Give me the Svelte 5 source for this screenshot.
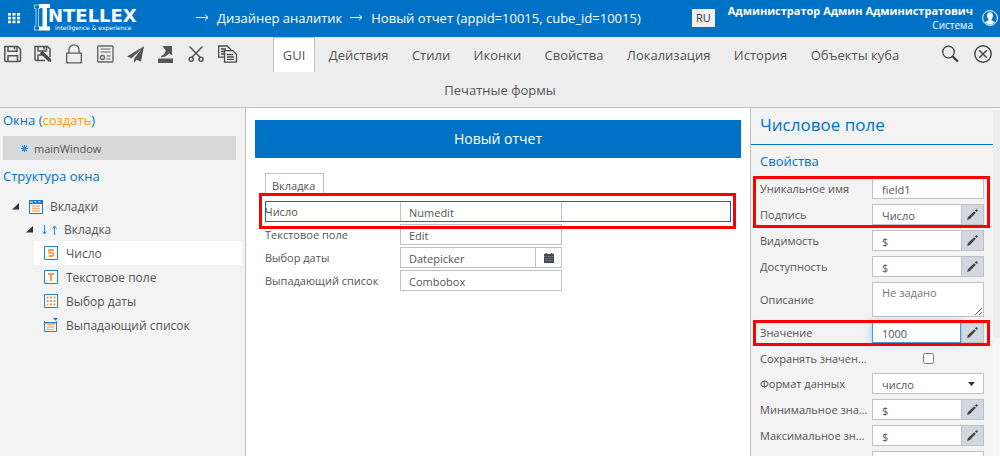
<script>
  let tabs = ['GUI', 'Действия', 'Стили', 'Иконки', 'Свойства', 'Локализация', 'История', 'Объекты куба', 'Печатные формы'];
  let activeTab = $state('GUI');

  let leaves = [
    { icon: 'number', label: 'Число' },
    { icon: 'text', label: 'Текстовое поле' },
    { icon: 'date', label: 'Выбор даты' },
    { icon: 'list', label: 'Выпадающий список' },
  ];
  let activeLeaf = $state('Число');

  let formFields = [
    { id: 'numedit', label: 'Число', value: 'Numedit', selected: true },
    { id: 'edit', label: 'Текстовое поле', value: 'Edit' },
    { id: 'datepicker', label: 'Выбор даты', value: 'Datepicker', date: true },
    { id: 'combobox', label: 'Выпадающий список', value: 'Combobox' },
  ];

  let groups = [
    {
      marked: true,
      rows: [
        { id: 'name', label: 'Уникальное имя', value: 'field1' },
        { id: 'caption', label: 'Подпись', value: 'Число', edit: true },
      ],
    },
    {
      rows: [
        { id: 'visible', label: 'Видимость', value: '$', edit: true },
        { id: 'enabled', label: 'Доступность', value: '$', edit: true },
        { id: 'description', label: 'Описание', type: 'area', placeholder: 'Не задано' },
      ],
    },
    {
      marked: true,
      rows: [{ id: 'value', label: 'Значение', value: '1000', edit: true, focused: true }],
    },
    {
      rows: [
        { id: 'keep', label: 'Сохранять значение', type: 'check' },
        { id: 'format', label: 'Формат данных', type: 'select', value: 'число' },
        { id: 'min', label: 'Минимальное значение', value: '$', edit: true },
        { id: 'max', label: 'Максимальное значение', value: '$', edit: true },
        { id: 'step', label: 'Максимальный шаг', value: '' },
      ],
    },
  ];
</script>

<div class="page">
  <header class="header">
    <button class="icon-btn apps" type="button" aria-label="Меню">
      <svg width="12" height="10" viewBox="0 0 12 10" fill="#fff">
        {#each [0, 4, 8] as y}
          {#each [0, 4.5, 9] as x}
            <rect {x} y={y * 0.95} width="3" height="2.6" />
          {/each}
        {/each}
      </svg>
    </button>

    <a class="logo" href="#home" aria-label="Intellex">
      <svg width="17" height="27" viewBox="0 0 17 27">
        <path d="M.5 1H6v3.5H4.500v18H6V26H.5v-3.500H2v-18H.5z" fill="none" stroke="#cfe5f7" stroke-width="0.8" />
        <path d="M5 0h11v4h-3v18.500h3v4H5v-4h3.500V4H5z" fill="#fff" />
      </svg>
      <span class="logo-text">
        <b>NTELLEX</b>
        <small>intelligence &amp; experience</small>
      </span>
    </a>

    <nav class="crumbs">
      {#each ['Дизайнер аналитик', 'Новый отчет (appid=10015, cube_id=10015)'] as crumb}
        <svg width="13" height="7" viewBox="0 0 13 7" fill="none" stroke="#fff">
          <path d="M0 3.500h12M9 .8l3 2.700-3 2.700" />
        </svg>
        <a href="#crumb">{crumb}</a>
      {/each}
    </nav>

    <button class="lang" type="button">RU</button>

    <div class="user">
      <b>Администратор Админ Администратович</b>
      <span>Система</span>
    </div>
    <button class="icon-btn" type="button" aria-label="Профиль">
      <svg width="16" height="16" viewBox="0 0 16 16">
        <circle cx="8" cy="8" r="7.400" fill="none" stroke="#fff" />
        <path d="M8 2.200c-2 0-3 1.400-3 3.200 0 1.500.6 2.700 1.500 3.500v1.300L3 12c1.200 1.500 3 2.600 5 2.600s3.800-1.100 5-2.600l-3.500-1.800V8.900C10.400 8.100 11 6.900 11 5.400c0-1.800-1-3.200-3-3.200z" fill="#fff" />
      </svg>
    </button>
  </header>

  <div class="toolbar">
    <div class="tools">
      <button class="icon-btn" type="button" aria-label="Сохранить">
        <svg width="20" height="18" viewBox="0 0 20 18" fill="none" stroke="#555" stroke-width="1.500">
          <path d="M1.800 1.500h13l2.700 2.700v11a1.300 1.300 0 0 1-1.300 1.300H3.100a1.300 1.300 0 0 1-1.300-1.300z" />
          <path d="M5 1.500v4.700h9V1.500M11.500 2v2.500M5 16.500v-5.700h9.500v5.700" />
        </svg>
      </button>
      <button class="icon-btn" type="button" aria-label="Сохранить как">
        <svg width="20" height="18" viewBox="0 0 20 18" fill="none" stroke="#555" stroke-width="1.500">
          <path d="M11 15.500H2.200a1.300 1.300 0 0 1-1.200-1.300V1.500h12.500L16 4v8" />
          <path d="M4 1.500V6h8.500V1.500M10 2v2.500M4 15v-5h5" />
          <path d="M7 7l9 8.500" stroke-width="3.600" stroke="#4a4a4a" />
          <path d="M15 14.500l2 2" stroke-width="2" />
        </svg>
      </button>
      <button class="icon-btn" type="button" aria-label="Заблокировать">
        <svg width="20" height="20" viewBox="0 0 20 20" fill="none" stroke="#5a5a5a" stroke-width="1.300">
          <path d="M1.700 9.200h14.600v9.600H1.700zM4 9V5.500a5 4.700 0 0 1 10 0V9" />
        </svg>
      </button>
      <button class="icon-btn" type="button" aria-label="Отчет">
        <svg width="20" height="18" viewBox="0 0 20 18" fill="none" stroke="#666" stroke-width="1.400">
          <rect x="1.700" y="1" width="15.300" height="16" rx="1" />
          <path d="M4.500 4h10M4.500 7h10M10.500 11h4M10.500 14h4" stroke-width="1.200" />
          <circle cx="6.500" cy="12.500" r="2" />
        </svg>
      </button>
      <button class="icon-btn" type="button" aria-label="Отправить">
        <svg width="20" height="18" viewBox="0 0 20 18" fill="#555">
          <path d="M17 1.200L0 11.500l4.500 1.700L14.500 4 7 13.800v4l2.600-3 4.400 2z" />
        </svg>
      </button>
      <button class="icon-btn" type="button" aria-label="Выгрузить">
        <svg width="20" height="18" viewBox="0 0 20 18" fill="#555">
          <path d="M0 13.500h15V18H0z" />
          <path d="M4.500 1H14v9.500l-2.800-2.300C9.500 10.500 7 12 4 12.200c-1.500.1-1.500-1 0-1.600 2-1 3.200-2.600 3.700-5.200z" />
        </svg>
      </button>
      <button class="icon-btn" type="button" aria-label="Вырезать">
        <svg width="20" height="18" viewBox="0 0 20 18" fill="none" stroke="#555" stroke-width="1.500">
          <path d="M.5 1.500l10.800 11M13.500 1.500l-10.800 11" />
          <circle cx="2.200" cy="14.200" r="2" />
          <circle cx="12" cy="14.200" r="2" />
        </svg>
      </button>
      <button class="icon-btn" type="button" aria-label="Копировать">
        <svg width="20" height="18" viewBox="0 0 20 18" fill="#eee" stroke="#4a4a4a" stroke-width="1.300">
          <path d="M-1.300 1h8.500l3.500 3.500v7.700h-12zM1 4h5M1 6.500h6M1 9h5" />
          <path d="M4.500 5.700h8.300l3.700 3.500v8h-12z" />
          <path d="M7 9.700h6M7 12h7M7 14.300h7" />
        </svg>
      </button>
    </div>

    <div class="tools tools-right">
      <button class="icon-btn" type="button" aria-label="Поиск">
        <svg width="17" height="18" viewBox="0 0 17 18" fill="none" stroke="#333">
          <circle cx="6.500" cy="7" r="5.800" stroke-width="1.200" />
          <path d="M10.800 11.500l5 5" stroke-width="2" />
        </svg>
      </button>
      <button class="icon-btn" type="button" aria-label="Закрыть">
        <svg width="18" height="18" viewBox="0 0 18 18" fill="none" stroke="#444" stroke-width="1.400">
          <circle cx="9" cy="9" r="8.200" />
          <path d="M5.200 5.200l7.600 7.600M12.800 5.200l-7.600 7.600" />
        </svg>
      </button>
    </div>

    <nav class="tabs">
      {#each tabs as tab}
        <button type="button" class="tab" class:active={activeTab === tab} onclick={() => (activeTab = tab)}>{tab}</button>{' '}
      {/each}
    </nav>
  </div>

  <main class="body">
    <aside class="left">
      <h2>Окна (<a href="#create">создать</a>)</h2>
      <button type="button" class="window">
        <svg width="7" height="7" viewBox="0 0 7 7" stroke="#2f8ad8" stroke-width="1.200">
          <path d="M3.500 0v7M0 3.500h7M1 1l5 5M6 1L1 6" />
        </svg>
        mainWindow
      </button>
      <h2>Структура окна</h2>

      <div class="tree">
        <div class="node">
          <svg width="7" height="7" viewBox="0 0 7 7"><path d="M7 0v6.500H0z" fill="#333" /></svg>
          <svg class="tabs-icon" width="14" height="14" viewBox="0 0 14 14">
            <path d="M.5.500h13v13H.5z" fill="#fff" stroke="#1478cc" />
            <path d="M0 0h14v4H0z" fill="#1478cc" />
            <path d="M1 1h3v2H1z" fill="#f9a95c" />
            <path d="M5.500 1h2v1.500h-2zM9.500 1h2v1.500h-2z" fill="#b5d6f0" />
            <path d="M3 6h8M3 8.500h8M3 11h8" stroke="#f9b374" stroke-width="1.400" />
          </svg>
          Вкладки
        </div>
        <div class="node inner">
          <svg width="7" height="7" viewBox="0 0 7 7"><path d="M7 0v6.500H0z" fill="#333" /></svg>
          <svg class="arrows" width="15" height="10" viewBox="0 0 15 10" fill="none" stroke="#2483d5">
            <path d="M2.500 0v9M.5 6.500l2 2.500 2-2.500M12.500 10V1M10.500 3.500l2-2.500 2 2.500" />
          </svg>
          Вкладка
        </div>
        {#each leaves as leaf}
          <button type="button" class="leaf" class:active={activeLeaf === leaf.label} onclick={() => (activeLeaf = leaf.label)}>
            <svg width="14" height="14" viewBox="0 0 14 14" fill="none">
              {#if leaf.icon === 'list'}
                <path d="M.5 4.500h12v9H.5z" fill="#fff" stroke="#2380cf" />
                <path d="M.5 3v2h12V3" stroke="#2380cf" />
                <path d="M2.500 6.500h8M2.500 9h8M2.500 11.500h8" stroke="#f9b374" stroke-width="1.500" />
                <path d="M9 0h5l-2.500 2.800z" fill="#1478cc" />
              {:else}
                <path d="M.5.500h13v13H.5z" fill="#fff" stroke="#2380cf" />
              {/if}
              {#if leaf.icon === 'number'}
                <path d="M9.800 4H5.200v2.800h2.400c2.300 0 2.300 3.200 0 3.200H4.600" stroke="#f99a45" stroke-width="1.800" />
              {:else if leaf.icon === 'text'}
                <path d="M4 4h6M7 4v7" stroke="#f99a45" stroke-width="2" />
              {:else if leaf.icon === 'date'}
                <path d="M2.500 3.500h9M2.500 7h9M2.500 10.500h9" stroke="#f99a45" stroke-width="2" stroke-dasharray="2 1.500" />
              {/if}
            </svg>
            {leaf.label}
          </button>
        {/each}
      </div>
    </aside>

    <section class="canvas">
      <h1>Новый отчет</h1>
      <div class="form">
        <button type="button" class="form-tab">Вкладка</button>
        {#each formFields as field}
          <div class="field" class:selected={field.selected}>
            <label for={field.id}>{field.label}</label>
            <div class="control">
              <input id={field.id} value={field.value} />
              {#if field.date}
                <button type="button" aria-label="Календарь">
                  <svg width="10" height="10" viewBox="0 0 10 10">
                    <path d="M0 1h1.500V0h1.500v1h4V0h1.500v1H10v9H0z" fill="#444a52" />
                    <path d="M0 3.500h10M1.500 5.500h7M1.500 7.500h7" stroke="#aaa" stroke-width="0.600" stroke-dasharray="1.200 0.800" />
                  </svg>
                </button>
              {/if}
            </div>
          </div>
        {/each}
      </div>
    </section>

    <aside class="right">
      <div class="props">
        <h2>Числовое поле</h2>
        <h3>Свойства</h3>
        {#each groups as group}
          <div class="group" class:marked={group.marked}>
            {#each group.rows as row}
              <div class="prop">
                <label for="prop-{row.id}">{row.label}</label>
                {#if row.type === 'area'}
                  <textarea id="prop-{row.id}" placeholder={row.placeholder}></textarea>
                {:else if row.type === 'check'}
                  <div class="check"><input id="prop-{row.id}" type="checkbox" /></div>
                {:else if row.type === 'select'}
                  <div class="control">
                    <select id="prop-{row.id}"><option>{row.value}</option></select>
                    <svg class="caret" width="7" height="4" viewBox="0 0 7 4"><path d="M0 0h7L3.500 4z" fill="#333" /></svg>
                  </div>
                {:else}
                  <div class="control" class:focused={row.focused}>
                    <input id="prop-{row.id}" value={row.value} />
                    {#if row.edit}
                      <button type="button" class="edit" aria-label="Изменить">
                        <svg width="11" height="11" viewBox="0 0 11 11">
                          <path d="M0 11l1-3L7.200 2.200l1.600 1.600L3 10zM8 1.500L9.500 0 11 1.500 9.500 3z" fill="#444" />
                        </svg>
                      </button>
                    {/if}
                  </div>
                {/if}
              </div>
            {/each}
          </div>
        {/each}
      </div>
      <div class="scroll"><div class="thumb"></div></div>
    </aside>
  </main>
</div>

<style>
  :global(body) {
    margin: 0;
  }

  .page,
  .page * {
    box-sizing: border-box;
  }

  .page {
    display: flex;
    flex-direction: column;
    height: 100vh;
    overflow: hidden;
    font-family: "Open Sans", sans-serif;
    font-size: 11px;
    color: #555;
    background: #fff;
  }

  button,
  input,
  select,
  textarea {
    font: inherit;
    color: inherit;
    margin: 0;
    border-radius: 0;
    outline: none;
  }

  a {
    color: inherit;
    text-decoration: none;
  }

  h1,
  h2,
  h3 {
    margin: 0;
    font-weight: 400;
  }

  svg {
    display: block;
    flex: none;
    overflow: visible;
  }

  .icon-btn {
    padding: 0;
    border: 0;
    background: none;
    cursor: pointer;
  }

  .header {
    display: flex;
    align-items: center;
    flex: none;
    height: 37px;
    padding: 0 2px 2px 8px;
    background: #0072c6;
    color: #fff;
  }

  .logo {
    display: flex;
    margin-left: 14px;
    width: 104px;
  }

  .logo-text {
    display: flex;
    flex-direction: column;
    margin-left: -3px;
    padding-top: 4px;
  }

  .logo-text b {
    font: bold 18px/16px "DejaVu Sans", sans-serif;
  }

  .logo-text small {
    padding-left: 7px;
    font: 6px/7px "DejaVu Sans", sans-serif;
    white-space: nowrap;
  }

  .crumbs {
    display: flex;
    align-items: center;
    gap: 8px;
    flex: 1;
    margin-left: 58px;
    font-size: 13px;
    white-space: nowrap;
  }

  .lang {
    width: 23px;
    height: 18px;
    padding: 0;
    border: 0;
    background: #f0f0f0;
    color: #333;
    line-height: 18px;
  }

  .user {
    display: flex;
    flex-direction: column;
    align-items: flex-end;
    margin: 0 9px 0 13px;
    font-size: 10px;
    line-height: 14px;
    white-space: nowrap;
  }

  .user b {
    font-size: 11px;
  }

  .toolbar {
    flex: none;
    min-height: 71px;
    border-bottom: 1px solid #c0c0c0;
    background: #eee;
  }

  .tools {
    display: flex;
    align-items: center;
    gap: 11px;
    float: left;
    height: 34px;
    padding: 0 5px 0 3px;
  }

  .tools-right {
    float: right;
    gap: 15px;
    padding: 0 8px 0 5px;
  }

  .tabs {
    text-align: center;
    font-size: 13px;
    line-height: 35px;
  }

  .tab {
    display: inline-block;
    height: 35px;
    padding: 0 9px;
    border: 1px solid transparent;
    border-bottom: 0;
    background: none;
    vertical-align: top;
    cursor: pointer;
  }

  .tab.active {
    border-color: #c0c0c0;
    background: #fff;
  }

  .body {
    display: flex;
    flex: 1;
    min-height: 0;
  }

  .left {
    flex: none;
    width: 246px;
    padding: 2px 3px 0;
    border-right: 1px solid #c0c0c0;
    background: #f3f3f3;
  }

  .left h2 {
    font-size: 13px;
    line-height: 20px;
    color: #0072c6;
  }

  .left h2 a {
    color: #ff9c00;
  }

  .window {
    display: flex;
    align-items: center;
    gap: 6px;
    width: 233px;
    height: 24px;
    margin: 6px 0;
    padding: 0 0 0 18px;
    border: 0;
    background: #d8d8d8;
  }

  .tree {
    padding-top: 9px;
    font-size: 12px;
  }

  .node {
    display: flex;
    align-items: center;
    height: 23px;
    padding-left: 9px;
  }

  .node.inner {
    padding-left: 23px;
  }

  .tabs-icon {
    margin: 0 7px 0 10px;
  }

  .arrows {
    margin: 0 7px 0 9px;
  }

  .leaf {
    display: flex;
    align-items: center;
    gap: 8px;
    width: 208px;
    height: 24px;
    margin-left: 31px;
    padding: 0 0 0 10px;
    border: 0;
    background: none;
  }

  .leaf.active {
    background: #fff;
  }

  .canvas {
    flex: 1;
    min-width: 0;
    padding: 12px 9px 0;
  }

  .canvas h1 {
    height: 38px;
    background: #0072c6;
    color: #fff;
    font-size: 14px;
    line-height: 38px;
    text-align: center;
  }

  .form {
    position: relative;
    padding: 15px 10px 0;
  }

  .form-tab {
    display: block;
    height: 21px;
    margin-bottom: 7px;
    padding: 2px 8px 0 6px;
    border: 1px solid #c0c0c0;
    border-bottom: 0;
    background: #fff;
  }

  .field {
    position: relative;
    display: flex;
    align-items: center;
    height: 21px;
    margin-bottom: 2px;
  }

  .field label {
    width: 135px;
  }

  .field .control {
    width: 162px;
  }

  /* outline of the selected element and the red marker round it */
  .selected::before {
    content: '';
    position: absolute;
    z-index: 1;
    inset: 0;
    border: 1px solid #0072c6;
    pointer-events: none;
  }

  .selected::after {
    content: '';
    position: absolute;
    z-index: 1;
    inset: -8px -5px -7px -6px;
    border: 3px solid #f00;
    pointer-events: none;
  }

  .control {
    position: relative;
    display: flex;
    height: 21px;
    border: 1px solid #c0c0c0;
    background: #fff;
  }

  .control input,
  .control select {
    flex: 1;
    min-width: 0;
    padding: 1px 8px 0;
    border: 0;
    background: none;
  }

  .prop .control input,
  .prop .control select {
    padding-left: 9px;
  }

  .field .control button {
    display: flex;
    align-items: center;
    justify-content: center;
    width: 26px;
    padding: 0;
    border: 0;
    border-left: 1px solid #c0c0c0;
    background: #fff;
  }

  .right {
    display: flex;
    flex: none;
    width: 250px;
    border-left: 1px solid #c0c0c0;
    background: #f3f3f3;
    overflow: hidden;
  }

  .props {
    flex: 1;
    min-width: 0;
  }

  .props h2 {
    height: 37px;
    padding-left: 9px;
    border-bottom: 1px solid #0072c6;
    color: #0072c6;
    font-size: 17px;
    line-height: 34px;
  }

  .props h3 {
    padding: 6px 0 7px 9px;
    color: #0072c6;
    font-size: 13px;
    line-height: 20px;
  }

  .group {
    position: relative;
    margin: 0 9px 5px;
  }

  .prop {
    display: flex;
    align-items: center;
    margin-bottom: 5px;
  }

  .prop:last-child {
    margin-bottom: 0;
  }

  .prop label {
    width: 108px;
    margin-right: 4px;
    overflow: hidden;
    text-overflow: ellipsis;
    white-space: nowrap;
  }

  .prop .control,
  .prop textarea,
  .check {
    flex: 1;
    min-width: 0;
  }

  .prop textarea {
    height: 35px;
    padding: 2px 9px;
    border: 1px solid #c0c0c0;
    background: #fff;
    resize: vertical;
  }

  .prop textarea::placeholder {
    color: #777;
  }

  .check {
    display: flex;
    align-items: center;
    justify-content: center;
    height: 20px;
  }

  .check input {
    width: 11px;
    height: 11px;
  }

  .edit {
    display: flex;
    align-items: center;
    justify-content: center;
    width: 22px;
    padding: 0;
    border: 0;
    border-left: 1px solid #c0c0c0;
    background: #d3d7e2;
  }

  .focused input {
    margin: -1px 0 -1px -1px;
    border: 1px solid #3c9ceb;
    box-shadow: 0 0 8px rgba(60, 156, 235, 0.5);
  }

  .prop .control select {
    appearance: none;
  }

  .caret {
    position: absolute;
    top: 8px;
    right: 8px;
    pointer-events: none;
  }

  .marked::after {
    content: '';
    position: absolute;
    z-index: 1;
    inset: -2px -6px -3px -7px;
    border: 3px solid #f00;
    pointer-events: none;
  }

  .scroll {
    width: 7px;
    padding-top: 2px;
    background: #f6f6f6;
  }

  .thumb {
    height: 66%;
    background: #ededed;
  }
</style>
